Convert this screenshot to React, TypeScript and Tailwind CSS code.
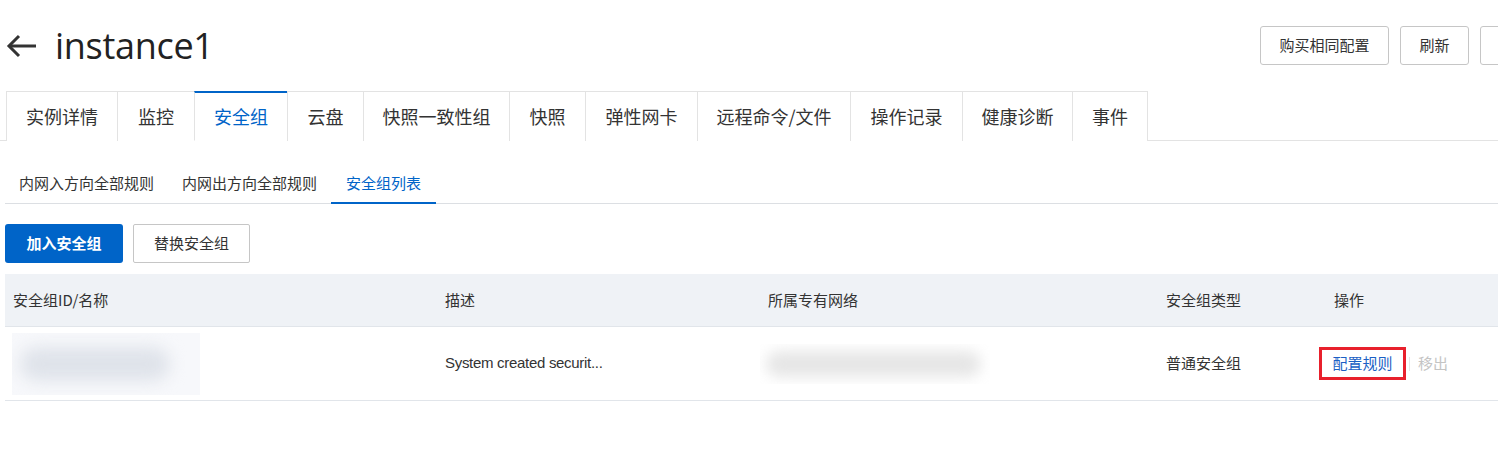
import React from 'react';

const CJK = "font-['Noto_Sans_CJK_SC','Noto_Sans',sans-serif]";

const tabs: { label: string; w: string }[] = [
  { label: '实例详情', w: 'w-[111px]' },
  { label: '监控', w: 'w-[77px]' },
  { label: '安全组', w: 'w-[93px]' },
  { label: '云盘', w: 'w-[76px]' },
  { label: '快照一致性组', w: 'w-[146px]' },
  { label: '快照', w: 'w-[76px]' },
  { label: '弹性网卡', w: 'w-[112px]' },
  { label: '远程命令/文件', w: 'w-[153px]' },
  { label: '操作记录', w: 'w-[112px]' },
  { label: '健康诊断', w: 'w-[110px]' },
  { label: '事件', w: 'w-[76px]' },
];

const subTabs = ['内网入方向全部规则', '内网出方向全部规则', '安全组列表'];

const BackArrow = () => (
  <svg width="32" height="24" viewBox="0 0 32 24" fill="none" stroke="#333" strokeWidth="3" strokeLinecap="butt">
    <path d="M30 12H3" />
    <path d="M13 2L3 12l10 10" strokeLinejoin="miter" />
  </svg>
);

export default function App() {
  return (
    <div className={`w-[1498px] h-[465px] overflow-hidden bg-white text-[#333] ${CJK}`}>
      {/* title row */}
      <div className="flex items-center justify-between pt-[26px] pl-[6px]">
        <div className="flex items-center h-[39px]">
          <BackArrow />
          <h1 className="ml-[17px] text-[36px] leading-none font-['Open_Sans',sans-serif] text-[#222] tracking-[-0.3px]">
            instance1
          </h1>
        </div>
        <div className="flex gap-[11px] -mr-[62px]">
          <button className="h-[39px] w-[129px] border border-[#c6c6c6] rounded-[3px] text-[15px] text-[#333]">购买相同配置</button>
          <button className="h-[39px] w-[69px] border border-[#c6c6c6] rounded-[3px] text-[15px] text-[#333]">刷新</button>
          <button className="h-[39px] w-[80px] border border-[#c6c6c6] rounded-[3px]" aria-label="更多" />
        </div>
      </div>

      {/* main tabs */}
      <div className="mt-[26px] flex border-b border-[#e3e3e3] pl-[6px]">
        {tabs.map((t, i) => {
          const active = i === 2;
          return (
            <div
              key={t.label}
              className={`${t.w} h-[50px] -mb-px flex items-center justify-center text-[18px] border-l border-[#e3e3e3] ${
                i === tabs.length - 1 ? 'border-r' : ''
              } ${active ? 'border-t-2 border-t-[#0064c8] text-[#0064c8] bg-white border-b border-b-white' : 'border-t bg-white'}`}
            >
              {t.label}
            </div>
          );
        })}
      </div>

      {/* sub tabs */}
      <div className="mt-[20px] ml-[5px] flex border-b border-[#dcdfe3]">
        {subTabs.map((s, i) => {
          const active = i === 2;
          return (
            <div
              key={s}
              className={`h-[43px] pt-[4px] px-[14px] -mb-px flex items-center text-[15px] border-b-2 ${
                active ? 'border-[#0064c8] text-[#0064c8] px-[15px]' : 'border-transparent text-[#333]'
              }`}
            >
              {s}
            </div>
          );
        })}
      </div>

      {/* action buttons */}
      <div className="mt-[20px] ml-[5px] flex gap-[10px]">
        <button className="h-[39px] w-[118px] rounded-[3px] bg-[#0064c8] text-white text-[15px] font-bold">加入安全组</button>
        <button className="h-[39px] w-[117px] rounded-[2px] border border-[#c6c6c6] bg-white text-[15px] text-[#333]">替换安全组</button>
      </div>

      {/* table */}
      <div className="mt-[11px] ml-[5px]">
        <div className="flex h-[53px] items-center bg-[#eff2f6] border-b border-[#e1e5ea] text-[15px] text-[#333]">
          <div className="w-[432px] pl-[8px]">安全组ID/名称</div>
          <div className="w-[323px] pl-[8px]">描述</div>
          <div className="w-[398px] pl-[8px]">所属专有网络</div>
          <div className="w-[168px] pl-[8px]">安全组类型</div>
          <div className="flex-1 pl-[8px]">操作</div>
        </div>
        <div className="flex h-[74px] items-center border-b border-[#e1e5ea] text-[15px] text-[#333]">
          <div className="w-[432px] pl-[7px]">
            <div className="w-[188px] h-[62px] bg-[#f7f8fb] overflow-hidden flex items-center">
              <div className="ml-[8px] w-[150px] h-[34px] rounded-full bg-[#dfe3ea] blur-[8px]" />
            </div>
          </div>
          <div className="w-[323px] pl-[8px] font-['Liberation_Sans_Narrow','Liberation_Sans',sans-serif] text-[15px] tracking-[-0.3px]">
            System created securit...
          </div>
          <div className="w-[398px] pl-[0px]">
            <div className="w-[230px] h-[40px] overflow-hidden flex items-center">
              <div className="ml-[6px] w-[215px] h-[26px] rounded-full bg-[#e6e6e6] blur-[7px]" />
            </div>
          </div>
          <div className="w-[168px] pl-[8px]">普通安全组</div>
          <div className="flex-1 flex items-center">
            <span className="-ml-[7px] h-[33px] w-[87px] border-[3px] border-[#e8202c] flex items-center justify-center text-[#1b5fc4]">
              配置规则
            </span>
            <span className="ml-[3px] w-px h-[14px] bg-[#e6e6e6]" />
            <span className="ml-[8px] text-[#c4c4c4]">移出</span>
          </div>
        </div>
      </div>
    </div>
  );
}
